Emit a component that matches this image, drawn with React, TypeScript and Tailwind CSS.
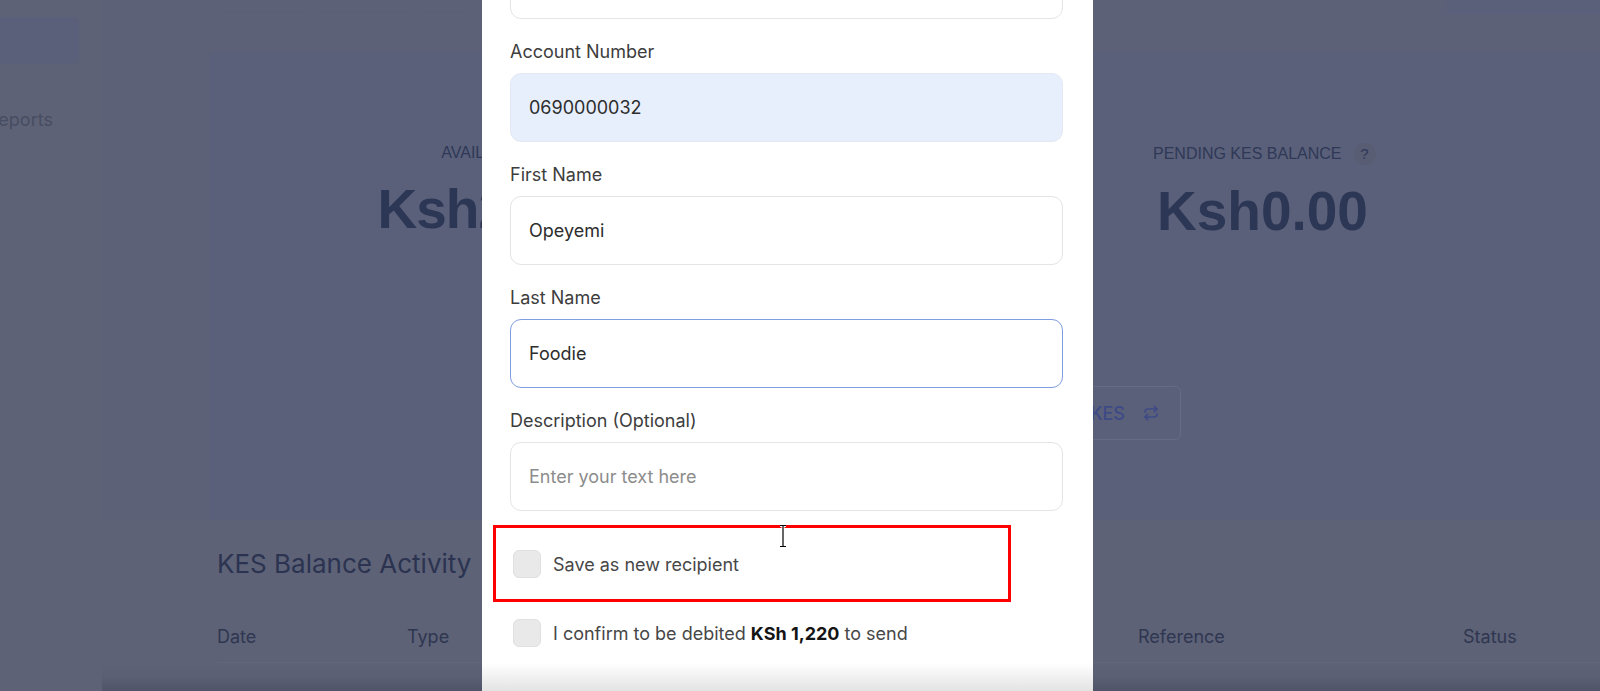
import { Repeat } from 'lucide-react';

type FieldProps = {
  label: string;
  value?: string;
  placeholder?: string;
  tone?: 'plain' | 'filled' | 'focus';
};

function Field({ label, value, placeholder, tone = 'plain' }: FieldProps) {
  const box =
    tone === 'filled'
      ? 'border border-[#e3e9f3] bg-[#e7effc]'
      : tone === 'focus'
        ? 'border-[1.5px] border-[#7f9de0] bg-white'
        : 'border border-[#e4e4e4] bg-white';
  return (
    <div className="flex flex-col">
      <div className="mb-[9px] h-6 text-[18px] leading-6 text-[#3d3d3d]">{label}</div>
      <div className={'flex h-[69px] items-center rounded-[11px] pl-[18px] text-[18px] ' + box}>
        {value ? (
          <span className="text-[#2d2d2d]">{value}</span>
        ) : (
          <span className="text-[#8c8c8c]">{placeholder}</span>
        )}
      </div>
    </div>
  );
}

function Check({ children }: { children: React.ReactNode }) {
  return (
    <div className="flex h-[28px] items-center gap-[12px] pl-[3px]">
      <span className="h-[28px] w-[28px] shrink-0 rounded-[6px] border border-[#e0e0e0] bg-[#e9e9e9]" />
      <span className="text-[18px] text-[#474747]">{children}</span>
    </div>
  );
}

export default function App() {
  return (
    <div className="relative flex h-[691px] w-full overflow-hidden bg-[#5d6277] [font-family:Inter,sans-serif]">
      {/* Sidebar (dimmed) */}
      <aside className="flex w-[102px] shrink-0 flex-col bg-[#5e6276]">
        <div className="mt-[17px] h-[47px] w-[79px] rounded-r-md bg-[#5a6079]" />
        <div className="-ml-[13px] mt-[42px] text-[18px] text-[#474d62]">Reports</div>
      </aside>

      {/* Main content (dimmed) */}
      <main className="flex flex-1 flex-col bg-[#5c6177]">
        <div className="flex h-[52px] items-start gap-[14px] pl-[118px]">
          <div className="h-[13px] w-[86px] border-b border-[#5a5f74]" />
          <div className="h-[13px] w-[86px] border-b border-[#5a5f74]" />
          <div className="h-[13px] w-[46px] border-b border-[#5a5f74]" />
          <div className="ml-auto h-[14px] w-[153px] bg-[#5a6079]" />
        </div>

        <section className="ml-[108px] flex h-[468px] flex-col bg-[#5a6079]">
          <div className="flex pt-[91px]">
            <div className="ml-[121px] flex w-[400px] flex-col items-center">
              <div className="translate-x-[10px] text-[16px] leading-5 text-[#2f3857] [font-family:'Liberation_Sans',Arial,sans-serif]">
                AVAILABLE KES BALANCE
              </div>
              <div className="mt-[19px] text-[55px] font-bold leading-[55px] tracking-[-1px] text-[#2c3655] [font-family:'Liberation_Sans',Arial,sans-serif]">
                Ksh2,640.00
              </div>
            </div>
            <div className="ml-[422px] flex flex-col items-start">
              <div className="flex items-center gap-[12px] text-[16px] leading-5 text-[#2f3857] [font-family:'Liberation_Sans',Arial,sans-serif]">
                <span>PENDING KES BALANCE</span>
                <span className="flex h-[22px] w-[22px] items-center justify-center rounded-full bg-[#585d74] text-[15px]">
                  ?
                </span>
              </div>
              <div className="ml-[4px] mt-[19px] text-[55px] font-bold leading-[55px] text-[#2c3655] [font-family:'Liberation_Sans',Arial,sans-serif]">
                Ksh0.00
              </div>
            </div>
          </div>

          <div className="ml-[711px] mt-[147px] flex h-[54px] w-[260px] items-center justify-end gap-[18px] rounded-md border border-[#666b84] pr-[21px] text-[18px] font-medium text-[#3e4a86]">
            <span>Convert to KES</span>
            <Repeat size={16} strokeWidth={2.4} />
          </div>
        </section>

        <section className="flex flex-1 flex-col bg-[#5d6277]">
          <h2 className="ml-[115px] mt-[28px] text-[26px] leading-8 text-[#2b3350]">KES Balance Activity</h2>
          <div className="ml-[115px] mt-[45px] grid grid-cols-[190px_731px_325px_1fr] border-b border-[#62677c] pb-[13px] text-[18px] leading-6 text-[#2f3650]">
            <span>Date</span>
            <span>Type</span>
            <span>Reference</span>
            <span>Status</span>
          </div>
          <div className="flex-1 bg-gradient-to-b from-[#5d6277] via-[#5a5f73] to-[#4f5468]" />
        </section>
      </main>

      {/* Modal */}
      <div className="absolute left-[482px] top-0 h-full w-[611px] overflow-hidden bg-white pl-[28px] pr-[30px]">
        <div className="-mt-[50px] flex flex-col gap-[21px]">
          <div className="h-[69px] rounded-[11px] border border-[#e4e4e4]" />
          <Field label="Account Number" value="0690000032" tone="filled" />
          <Field label="First Name" value="Opeyemi" />
          <Field label="Last Name" value="Foodie" tone="focus" />
          <Field label="Description (Optional)" placeholder="Enter your text here" />
        </div>

        <div className="mt-[39px] flex flex-col gap-[41px]">
          <Check>Save as new recipient</Check>
          <Check>
            I confirm to be debited <b className="font-bold text-[#151515]">KSh 1,220</b> to send
          </Check>
        </div>

        {/* highlight annotation */}
        <div className="absolute left-[11px] top-[525px] h-[77px] w-[518px] border-[3px] border-[#ff0000]" />

        {/* text cursor */}
        <svg className="absolute left-[296px] top-[524px]" width="10" height="24" viewBox="0 0 10 24">
          <path d="M2 1.5h6M5 1.5v21M2 22.5h6" stroke="#fff" strokeWidth="3" fill="none" />
          <path d="M2 1.5h6M5 1.5v21M2 22.5h6" stroke="#000" strokeWidth="1.2" fill="none" />
        </svg>

        <div className="absolute bottom-0 left-0 right-0 h-[28px] bg-gradient-to-b from-white to-[#e3e3e3]" />
      </div>
    </div>
  );
}
